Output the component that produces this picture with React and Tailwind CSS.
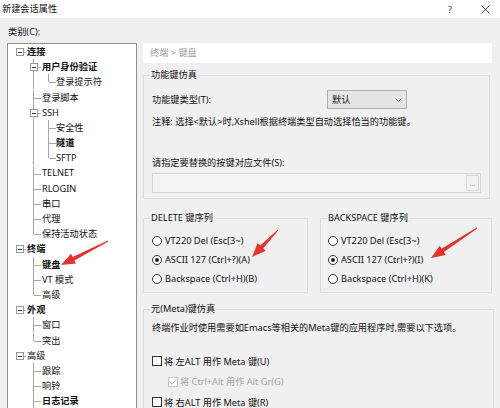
import React from "react";

const tree = [
  { t: "连接", l: 0, exp: true, b: true },
  { t: "用户身份验证", l: 1, exp: true, b: true },
  { t: "登录提示符", l: 2, last: true, p: [1] },
  { t: "登录脚本", l: 1 },
  { t: "SSH", l: 1, exp: true },
  { t: "安全性", l: 2, p: [1] },
  { t: "隧道", l: 2, b: true, p: [1] },
  { t: "SFTP", l: 2, last: true, p: [1] },
  { t: "TELNET", l: 1 },
  { t: "RLOGIN", l: 1 },
  { t: "串口", l: 1 },
  { t: "代理", l: 1 },
  { t: "保持活动状态", l: 1, last: true },
  { t: "终端", l: 0, exp: true, b: true },
  { t: "键盘", l: 1, b: true },
  { t: "VT 模式", l: 1 },
  { t: "高级", l: 1, last: true },
  { t: "外观", l: 0, exp: true, b: true },
  { t: "窗口", l: 1 },
  { t: "突出", l: 1, last: true },
  { t: "高级", l: 0, exp: true },
  { t: "跟踪", l: 1 },
  { t: "响铃", l: 1 },
  { t: "日志记录", l: 1, b: true },
];

const CX = [11.5, 25.5, 40.5];
const TX = [19, 34, 48];
const H = 15.2;
const M = 7.6;
const LC = "#a5a5a5";

function Guides({ item }) {
  const { l, exp, last, p = [] } = item;
  const w = TX[l];
  const cx = CX[l];
  return (
    <svg width={w} height={H} className="shrink-0" shapeRendering="crispEdges">
      {p.map((k) => (
        <line key={k} x1={CX[k]} y1={0} x2={CX[k]} y2={H} stroke={LC} />
      ))}
      {l > 0 && (
        <>
          <line x1={cx} y1={0} x2={cx} y2={last ? M : H} stroke={LC} />
          <line x1={cx} y1={M + 0.5} x2={cx + 7} y2={M + 0.5} stroke={LC} />
        </>
      )}
      {exp && (
        <>
          {l === 0 && <line x1={cx} y1={M + 0.5} x2={cx + 6.5} y2={M + 0.5} stroke={LC} />}
          <rect x={cx - 3.5} y={M - 3} width={7} height={7} fill="#fff" stroke="#9a9a9a" />
          <line x1={cx - 1.5} y1={M + 0.5} x2={cx + 2.5} y2={M + 0.5} stroke="#333" />
        </>
      )}
    </svg>
  );
}

function Arrows() {
  const arrows = [
    [108, 241, 61, 265],
    [278, 230, 252, 257],
    [477, 228, 431, 258],
  ];
  const poly = ([x1, y1, x2, y2]) => {
    const dx = x2 - x1;
    const dy = y2 - y1;
    const len = Math.hypot(dx, dy);
    const ux = dx / len;
    const uy = dy / len;
    const nx = -uy;
    const ny = ux;
    const hl = 14;
    const hw = 5.5;
    const bx = x2 - ux * hl;
    const by = y2 - uy * hl;
    const pts = [
      [x1 + nx * 0.5, y1 + ny * 0.5],
      [bx + nx * 2, by + ny * 2],
      [bx + nx * hw, by + ny * hw],
      [x2, y2],
      [bx - nx * hw, by - ny * hw],
      [bx - nx * 2, by - ny * 2],
      [x1 - nx * 0.5, y1 - ny * 0.5],
    ];
    return pts.map((q) => q.map((v) => v.toFixed(1)).join(",")).join(" ");
  };
  return (
    <svg width="500" height="408" className="absolute left-0 top-0 pointer-events-none">
      {arrows.map((a, i) => (
        <polygon key={i} points={poly(a)} fill="#e5322d" />
      ))}
    </svg>
  );
}

function Radio({ checked, children }) {
  return (
    <div className="h-[19px] flex items-center">
      <span className="w-[10px] h-[10px] rounded-full border border-[#333] bg-white flex items-center justify-center shrink-0">
        {checked && <span className="w-[4px] h-[4px] rounded-full bg-[#222]" />}
      </span>
      <span className="ml-[3px]">{children}</span>
    </div>
  );
}

function Check({ children, disabled, checked, indent }) {
  return (
    <div className={"h-[20.5px] flex items-center " + (indent ? "pl-[16px]" : "")}>
      <span
        className={
          "w-[10px] h-[10px] border bg-white flex items-center justify-center shrink-0 " +
          (disabled ? "border-[#c4c4c4]" : "border-[#333]")
        }
      >
        {checked && (
          <svg width="8" height="8" viewBox="0 0 8 8">
            <path d="M1 4.2 L3 6.2 L7 1.5" fill="none" stroke="#b0b0b0" strokeWidth="1" />
          </svg>
        )}
      </span>
      <span className={"ml-[2px] " + (disabled ? "text-[#a3a3a3]" : "")}>{children}</span>
    </div>
  );
}

function Group({ label, className, children }) {
  return (
    <div className={"relative border border-[#dcdcdc] " + className}>
      <span className="absolute left-[6px] -top-[8px] bg-[#f0f0f0] px-[1px] leading-[14px]">{label}</span>
      {children}
    </div>
  );
}

export default function App() {
  return (
    <div className="relative w-[500px] h-[408px] overflow-hidden bg-[#f0f0f0] text-[9.2px] text-[#111] font-['Noto_Sans','Noto_Sans_CJK_SC',sans-serif] leading-none">
      {/* title bar */}
      <div className="h-[18px] bg-white flex items-center justify-between pl-[2px] pr-[10px]">
        <span>新建会话属性</span>
        <div className="flex items-center">
          <span className="text-[#333] text-[9px] mr-[29px]">?</span>
          <svg width="9" height="9" viewBox="0 0 9 9">
            <path d="M0.5 0.5 L8.5 8.5 M8.5 0.5 L0.5 8.5" stroke="#333" strokeWidth="0.9" />
          </svg>
        </div>
      </div>

      <div className="flex">
        {/* left */}
        <div className="w-[143px] shrink-0 pt-[6px]">
          <div className="h-[16px] flex items-center pl-[8px]">类别(C):</div>
          <div className="mt-[3px] ml-[7px] w-[130px] h-[380px] border border-[#8a8f96] bg-white overflow-hidden">
            {tree.map((it, i) => (
              <div key={i} className="h-[15.2px] flex items-center">
                <Guides item={it} />
                <span className={it.b ? "font-bold" : ""}>{it.t}</span>
              </div>
            ))}
          </div>
        </div>

        {/* right */}
        <div className="flex-1 pt-[25px] pr-[8px]">
          <div className="h-[20px] bg-white flex items-center pl-[7px] text-[#9e9e9e]">终端 &gt; 键盘</div>

          <Group label="功能键仿真" className="mt-[12px] mr-[2px] pt-[14px] pl-[8px] pb-[5px]">
            <div className="h-[19px] flex items-center">
              <span className="w-[175px]">功能键类型(T):</span>
              <div className="w-[80px] h-[19px] bg-[#e5e5e5] border border-[#adadad] flex items-center justify-between pl-[4px] pr-[4px]">
                <span>默认</span>
                <svg width="7" height="4" viewBox="0 0 7 4">
                  <path d="M0.5 0.5 L3.5 3.5 L6.5 0.5" fill="none" stroke="#666" strokeWidth="0.9" />
                </svg>
              </div>
            </div>
            <div className="mt-[6px] h-[14px] flex items-center">
              注释: 选择&lt;默认&gt;时,Xshell根据终端类型自动选择恰当的功能键。
            </div>
            <div className="mt-[27px] h-[14px] flex items-center">请指定要替换的按键对应文件(S):</div>
            <div className="mt-[3px] w-[329px] h-[20px] border border-[#d4d4d4] bg-[#f3f3f3] flex justify-end p-[1px]">
              <div className="w-[13px] border border-[#d9d9d9] bg-[#f3f3f3] flex items-end justify-center pb-[3px] text-[#8a8a8a] text-[8px]">
                ...
              </div>
            </div>
          </Group>

          <div className="mt-[19px] flex gap-[12px]">
            <Group label="DELETE 键序列" className="w-[165px] pt-[12px] pl-[8px] pb-[4px]">
              <Radio>VT220 Del (Esc[3~)</Radio>
              <Radio checked>ASCII 127 (Ctrl+?)(A)</Radio>
              <Radio>Backspace (Ctrl+H)(B)</Radio>
            </Group>
            <Group label="BACKSPACE 键序列" className="flex-1 pt-[12px] pl-[7px] pb-[4px]">
              <Radio>VT220 Del (Esc[3~)</Radio>
              <Radio checked>ASCII 127 (Ctrl+?)(I)</Radio>
              <Radio>Backspace (Ctrl+H)(K)</Radio>
            </Group>
          </div>

          <Group label="元(Meta)键仿真" className="mt-[16px] -mr-[2px] pt-[11px] pl-[8px] h-[120px]">
            <div className="h-[14px] flex items-center">
              终端作业时使用需要如Emacs等相关的Meta键的应用程序时,需要以下选项。
            </div>
            <div className="mt-[16px]">
              <Check>将 左ALT 用作 Meta 键(U)</Check>
              <Check disabled checked indent>将 Ctrl+Alt 用作 Alt Gr(G)</Check>
              <Check>将 右ALT 用作 Meta 键(R)</Check>
            </div>
          </Group>
        </div>
      </div>

      <Arrows />
    </div>
  );
}
